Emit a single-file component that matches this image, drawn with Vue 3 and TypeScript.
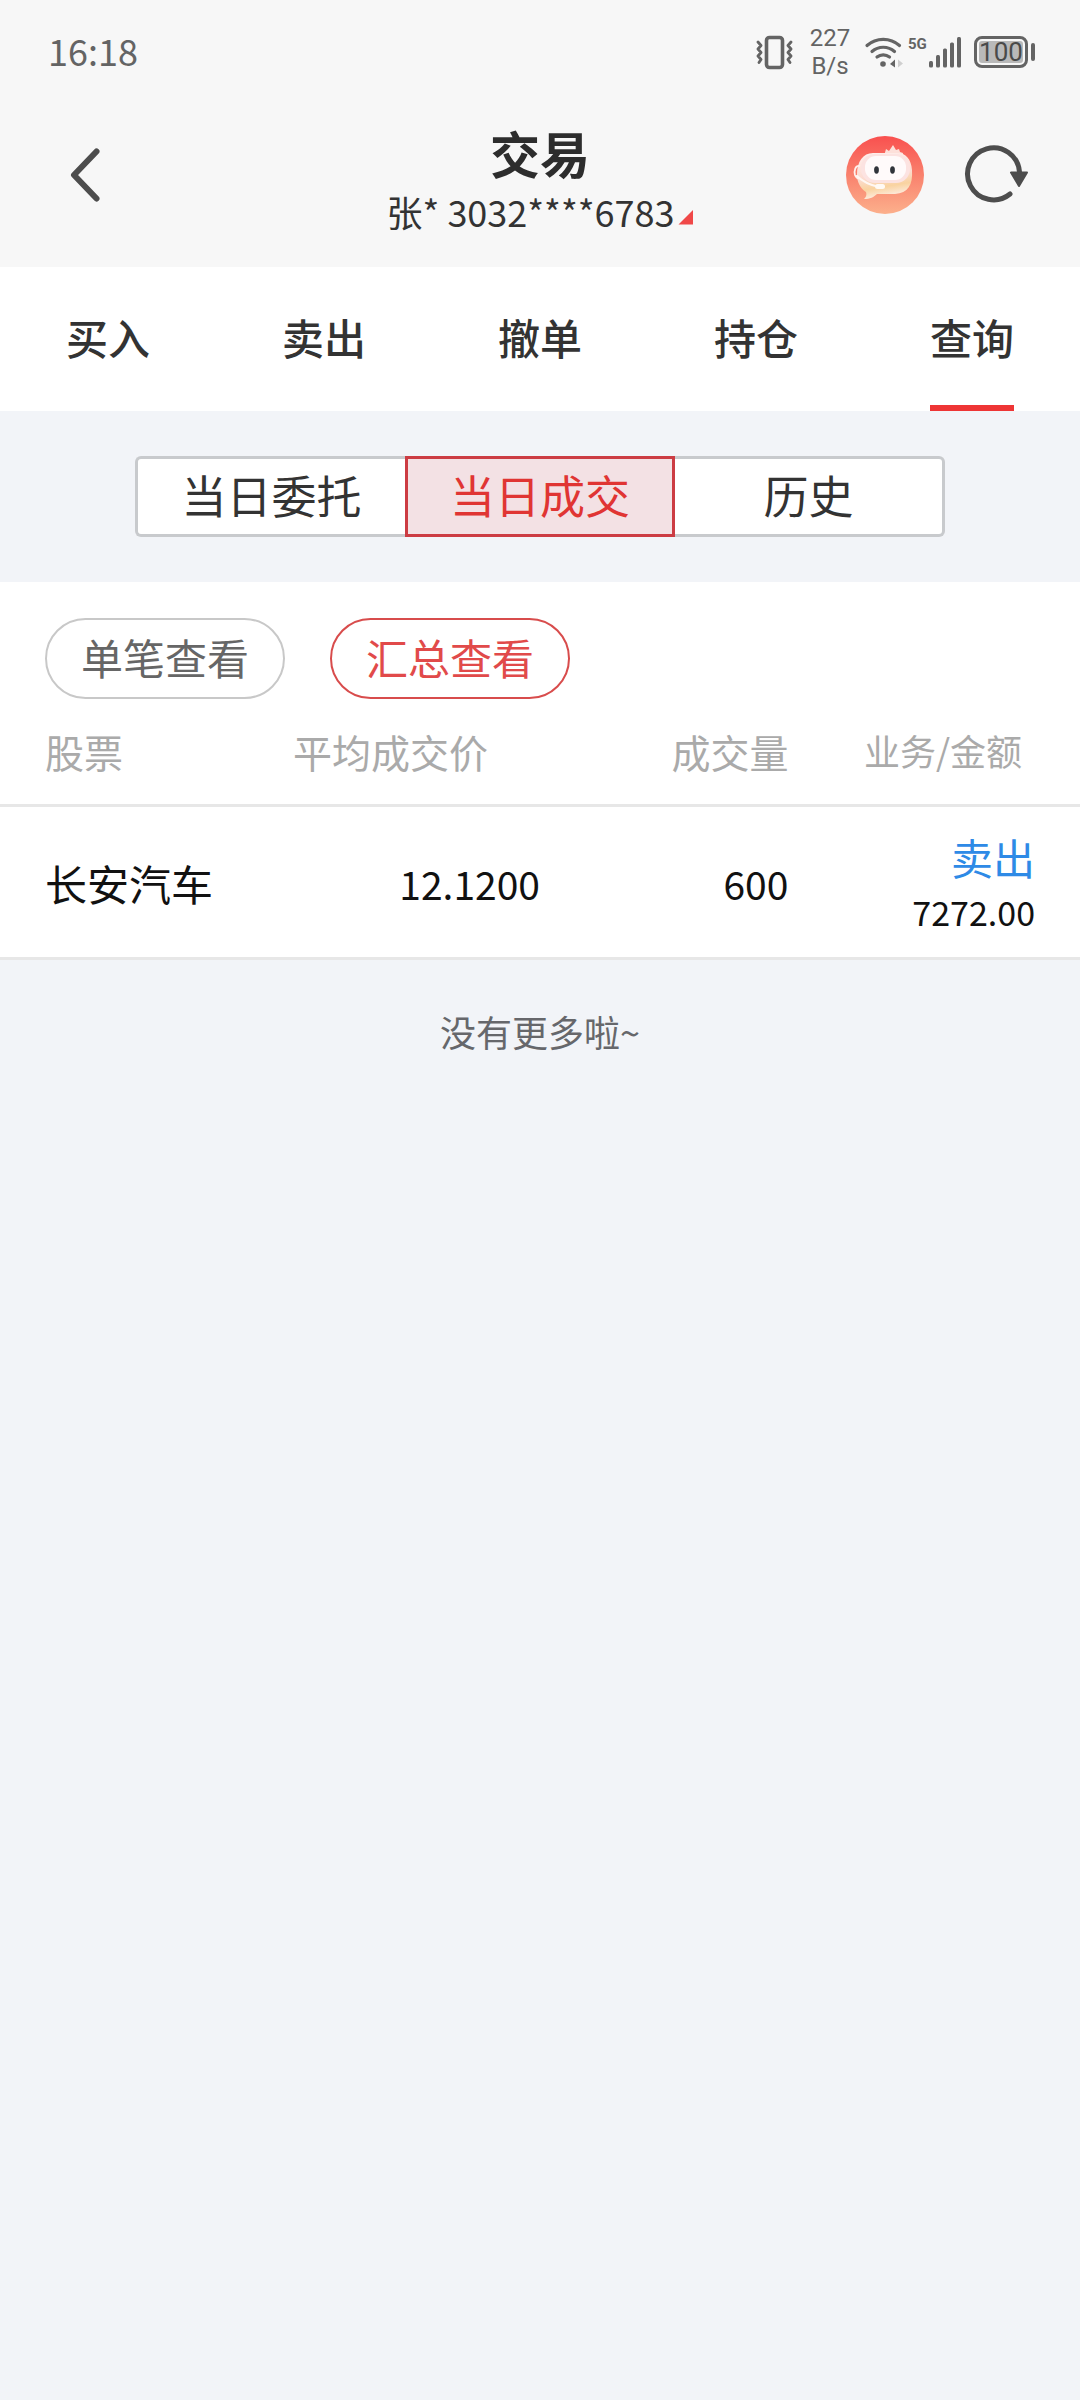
<script setup lang="ts">
import { ref } from 'vue'

interface Deal {
  stock: string
  price: string
  volume: string
  side: string
  amount: string
}

const tabs: string[] = ['买入', '卖出', '撤单', '持仓', '查询']
const segments: string[] = ['当日委托', '当日成交', '历史']
const views: string[] = ['单笔查看', '汇总查看']

const activeTab = ref<string>('查询')
const activeSegment = ref<string>('当日成交')
const activeView = ref<string>('汇总查看')

const deals: Deal[] = [
  { stock: '长安汽车', price: '12.1200', volume: '600', side: '卖出', amount: '7272.00' },
]
</script>

<template>
  <div class="page">
    <div class="status">
      <span class="clock">16:18</span>
      <div class="indicators">
        <svg class="vibrate" width="40" height="36" viewBox="0 0 40 36" fill="none" stroke="#646464" stroke-linecap="round" stroke-linejoin="round">
          <rect x="11.500" y="3.500" width="16" height="30" rx="3" stroke-width="3.600" />
          <path d="M3 8l3 3.500-3 3.500 3 3.500-3 3.500 3 3.500-2 3M36 8l-3 3.500 3 3.500-3 3.500 3 3.500-3 3.500 2 3" stroke-width="2.800" />
        </svg>
        <div class="speed"><span>227</span><span>B/s</span></div>
        <svg class="wifi" width="40" height="36" viewBox="0 0 40 36" fill="none" stroke="#646464" stroke-width="3.200" stroke-linecap="round">
          <path d="M3 11.500a24.500 24.500 0 0 1 32.500 0M8 17.500a17 17 0 0 1 22.500 0M13 23a10 10 0 0 1 12.500 0" />
          <circle cx="19" cy="30" r="2.800" fill="#646464" stroke="none" />
          <path d="M31 25.500v8l-5-3.500z" fill="#646464" stroke="none" />
          <path d="M34 25.500v8l5-4z" fill="#cfcfcf" stroke="none" />
        </svg>
        <span class="network">5G</span>
        <svg class="signal" width="34" height="36" viewBox="0 0 34 36" fill="#646464">
          <rect x="1" y="27" width="4" height="6.500" rx="1.500" />
          <rect x="8" y="21" width="4" height="12.500" rx="1.500" />
          <rect x="15" y="14.500" width="4" height="19" rx="1.500" />
          <rect x="22" y="8.500" width="4" height="25" rx="1.500" />
          <rect x="29" y="3" width="4" height="30.500" rx="1.500" />
        </svg>
        <div class="battery"><span class="level">100</span></div>
      </div>
    </div>

    <header class="header">
      <button class="icon-button back" type="button" aria-label="返回">
        <svg width="34" height="56" viewBox="0 0 34 56" fill="none" stroke="#4d4d4d" stroke-width="6" stroke-linecap="round" stroke-linejoin="round">
          <path d="M28.500 4.500L6 28l22.500 23.500" />
        </svg>
      </button>
      <div class="heading">
        <h1>交易</h1>
        <button class="account" type="button">张* 3032****6783<i class="corner"></i></button>
      </div>
      <div class="actions">
        <button class="icon-button" type="button" aria-label="客服">
          <svg width="78" height="78" viewBox="0 0 78 78">
            <defs>
              <linearGradient id="disc" x1="0" y1="0" x2="0" y2="1">
                <stop offset="0" stop-color="#f9504f" />
                <stop offset="0.500" stop-color="#f9816d" />
                <stop offset="1" stop-color="#fcb08c" />
              </linearGradient>
              <linearGradient id="shell" x1="0" y1="0" x2="0.200" y2="1">
                <stop offset="0" stop-color="#fff0ee" />
                <stop offset="0.550" stop-color="#fcdcd2" />
                <stop offset="0.800" stop-color="#f9d3a0" />
                <stop offset="1" stop-color="#fdeadb" />
              </linearGradient>
            </defs>
            <circle cx="39" cy="39" r="39" fill="url(#disc)" />
            <path d="M38 20l2-7 3 2 4-6 3 5 3-1 1 3 3 1-1 8z" fill="#fde0da" />
            <path d="M27 17h24c9 0 14 6 15 17 1 15-4 23-17 24H31c-3 3-7 5-13 5 2-2 3-4 2-7-6-4-9-10-9-18 0-12 6-21 16-21z" fill="url(#shell)" />
            <rect x="15" y="18" width="49" height="29" rx="14" fill="#fce3e1" />
            <rect x="19" y="20" width="41" height="24" rx="11" fill="#fffafa" />
            <ellipse cx="30.500" cy="34" rx="2.400" ry="3.700" fill="#30343a" />
            <ellipse cx="46.500" cy="34" rx="2.400" ry="3.700" fill="#30343a" />
            <path d="M14 30c-5-1-6 5-5 9 1 3 3 4 5 3" fill="none" stroke="#fff0ec" stroke-width="1.800" />
            <path d="M11 40c6 6 13 9 22 11" fill="none" stroke="#fff7f2" stroke-width="2.200" stroke-linecap="round" />
            <rect x="29" y="48" width="10" height="5" rx="2.500" fill="#fffaf5" />
          </svg>
        </button>
        <button class="icon-button" type="button" aria-label="刷新">
          <svg width="66" height="60" viewBox="0 0 66 60">
            <path d="M56.500 27A26 26 0 1 0 47 49" fill="none" stroke="#4d4d4d" stroke-width="5" stroke-linecap="round" />
            <path d="M48 27.500h16L56 41z" fill="#4d4d4d" stroke="#4d4d4d" stroke-width="2" stroke-linejoin="round" />
          </svg>
        </button>
      </div>
    </header>

    <nav class="tabs">
      <button
        v-for="tab in tabs"
        :key="tab"
        type="button"
        :class="{ active: tab === activeTab }"
        @click="activeTab = tab"
      >
        <span>{{ tab }}</span>
      </button>
    </nav>

    <section class="segment-area">
      <div class="segments">
        <button
          v-for="segment in segments"
          :key="segment"
          type="button"
          :class="{ active: segment === activeSegment }"
          @click="activeSegment = segment"
        >
          {{ segment }}
        </button>
      </div>
    </section>

    <main class="deals">
      <div class="views">
        <button
          v-for="view in views"
          :key="view"
          type="button"
          :class="{ active: view === activeView }"
          @click="activeView = view"
        >
          {{ view }}
        </button>
      </div>
      <table>
        <thead>
          <tr>
            <th class="stock" scope="col">股票</th>
            <th class="price" scope="col">平均成交价</th>
            <th class="volume" scope="col">成交量</th>
            <th class="amount" scope="col">业务/金额</th>
          </tr>
        </thead>
        <tbody>
          <tr v-for="deal in deals" :key="deal.stock">
            <td class="stock">{{ deal.stock }}</td>
            <td class="number">{{ deal.price }}</td>
            <td class="number">{{ deal.volume }}</td>
            <td class="amount">
              <div class="side">{{ deal.side }}</div>
              <div class="total">{{ deal.amount }}</div>
            </td>
          </tr>
        </tbody>
      </table>
    </main>

    <p class="end">没有更多啦~</p>
  </div>
</template>

<style>
body {
  margin: 0;
  background: #f2f4f8;
}
</style>

<style scoped>
.page {
  min-height: 100vh;
  background: #f2f4f8;
  color: #333;
  font-family: "Noto Sans CJK SC", sans-serif;
}

button {
  margin: 0;
  padding: 0;
  border: 0;
  background: none;
  color: inherit;
  font: inherit;
}

svg {
  display: block;
}

.status {
  display: flex;
  align-items: center;
  justify-content: space-between;
  height: 104px;
  padding: 0 45px 0 48px;
  background: #f7f7f7;
  color: #646464;
}

.clock {
  font-size: 36px;
  line-height: 48px;
  padding-bottom: 4px;
}

.indicators {
  display: flex;
  align-items: center;
}

.speed {
  display: flex;
  flex-direction: column;
  align-items: center;
  width: 42px;
  margin: 0 13px 0 14px;
  font-family: Roboto, sans-serif;
  font-size: 24px;
  line-height: 28px;
}

.network {
  align-self: flex-start;
  width: 20px;
  margin-left: 4px;
  font: bold 15px/40px Roboto, sans-serif;
}

.battery {
  position: relative;
  display: flex;
  box-sizing: border-box;
  width: 54px;
  height: 32px;
  margin: 0 7px 0 12px;
  padding: 2px;
  border: 3px solid #646464;
  border-radius: 8px;
}

.battery::after {
  content: "";
  position: absolute;
  top: 4px;
  right: -10px;
  width: 4px;
  height: 18px;
  border-radius: 2px;
  background: #646464;
}

.level {
  flex: 1;
  display: flex;
  align-items: center;
  justify-content: center;
  border-radius: 3px;
  background: #b9b9b9;
  color: #4a4a4a;
  font-family: Roboto, sans-serif;
  font-size: 26px;
  line-height: 20px;
}

.header {
  display: grid;
  grid-template-columns: 1fr auto 1fr;
  align-items: center;
  height: 142px;
  padding: 0 51px 21px 68px;
  background: #f7f7f7;
}

.icon-button {
  justify-self: start;
}

.heading {
  display: flex;
  flex-direction: column;
  align-items: center;
  margin-left: -17px;
  padding-top: 10px;
}

h1 {
  margin: 0;
  color: #2d2d2d;
  font-size: 50px;
  font-weight: 700;
  line-height: 62px;
}

.account {
  display: flex;
  align-items: center;
  font-size: 36px;
  line-height: 56px;
  white-space: pre;
}

.corner {
  width: 15px;
  height: 15px;
  margin: 12px 0 0 4px;
  background: #f04848;
  clip-path: polygon(100% 0, 100% 100%, 0 100%);
}

.actions {
  display: flex;
  align-items: center;
  justify-content: flex-end;
  gap: 39px;
}

.tabs {
  display: flex;
  background: #fff;
}

.tabs button {
  flex: 1;
  display: flex;
  justify-content: center;
  height: 144px;
}

.tabs span {
  box-sizing: border-box;
  height: 144px;
  border-bottom: 6px solid transparent;
  font-size: 42px;
  font-weight: 500;
  line-height: 140px;
}

.tabs .active span {
  border-color: #ee3535;
}

.segment-area {
  padding: 45px 0;
}

.segments {
  display: flex;
  width: 75%;
  margin: 0 auto;
}

.segments button {
  flex: none;
  box-sizing: border-box;
  width: calc(100% / 3);
  height: 81px;
  padding-bottom: 4px;
  border: 3px solid #c8cacd;
  background: #fff;
  font-size: 45px;
  line-height: 70px;
}

.segments button:first-child {
  border-right: 0;
  border-radius: 6px 0 0 6px;
}

.segments button:last-child {
  border-left: 0;
  border-radius: 0 6px 6px 0;
}

.segments .active {
  border-color: #cc3c43;
  background: #f3e1e4;
  color: #e03533;
}

.deals {
  padding-top: 36px;
  background: #fff;
}

.views {
  display: flex;
  gap: 45px;
  padding: 0 45px;
}

.views button {
  box-sizing: border-box;
  height: 81px;
  padding: 0 34px 3px;
  border: 2px solid #c8c8c8;
  border-radius: 41px;
  color: #666;
  font-size: 42px;
  line-height: 74px;
}

.views .active {
  border-color: #d84c4c;
  color: #e14a4a;
}

table {
  width: 100%;
  border-collapse: separate;
  border-spacing: 0;
  table-layout: fixed;
}

th,
td {
  box-sizing: border-box;
  padding: 0;
  border-bottom: 3px solid #e7e7e7;
  text-align: right;
}

th {
  height: 108px;
  padding-bottom: 2px;
  color: #aaa;
  font-size: 39px;
  font-weight: 400;
  line-height: 56px;
}

th.stock {
  width: 25%;
}

th.price {
  width: 25%;
  padding-right: 52px;
}

th.volume {
  width: 23%;
}

th.amount {
  padding: 0 58px 4px 0;
  font-size: 36px;
}

td {
  height: 153px;
  color: #111;
}

th.stock,
td.stock {
  padding-left: 45px;
  text-align: left;
}

td.stock {
  font-size: 42px;
}

td.number {
  padding-top: 2px;
  font-size: 39px;
}

td.amount {
  padding-right: 45px;
}

.side {
  color: #2e8ae6;
  font-size: 42px;
  line-height: 60px;
}

.total {
  font-size: 34px;
  line-height: 50px;
}

.end {
  margin: 0;
  padding: 45px 0;
  color: #66676b;
  font-size: 36px;
  line-height: 52px;
  text-align: center;
}
</style>
